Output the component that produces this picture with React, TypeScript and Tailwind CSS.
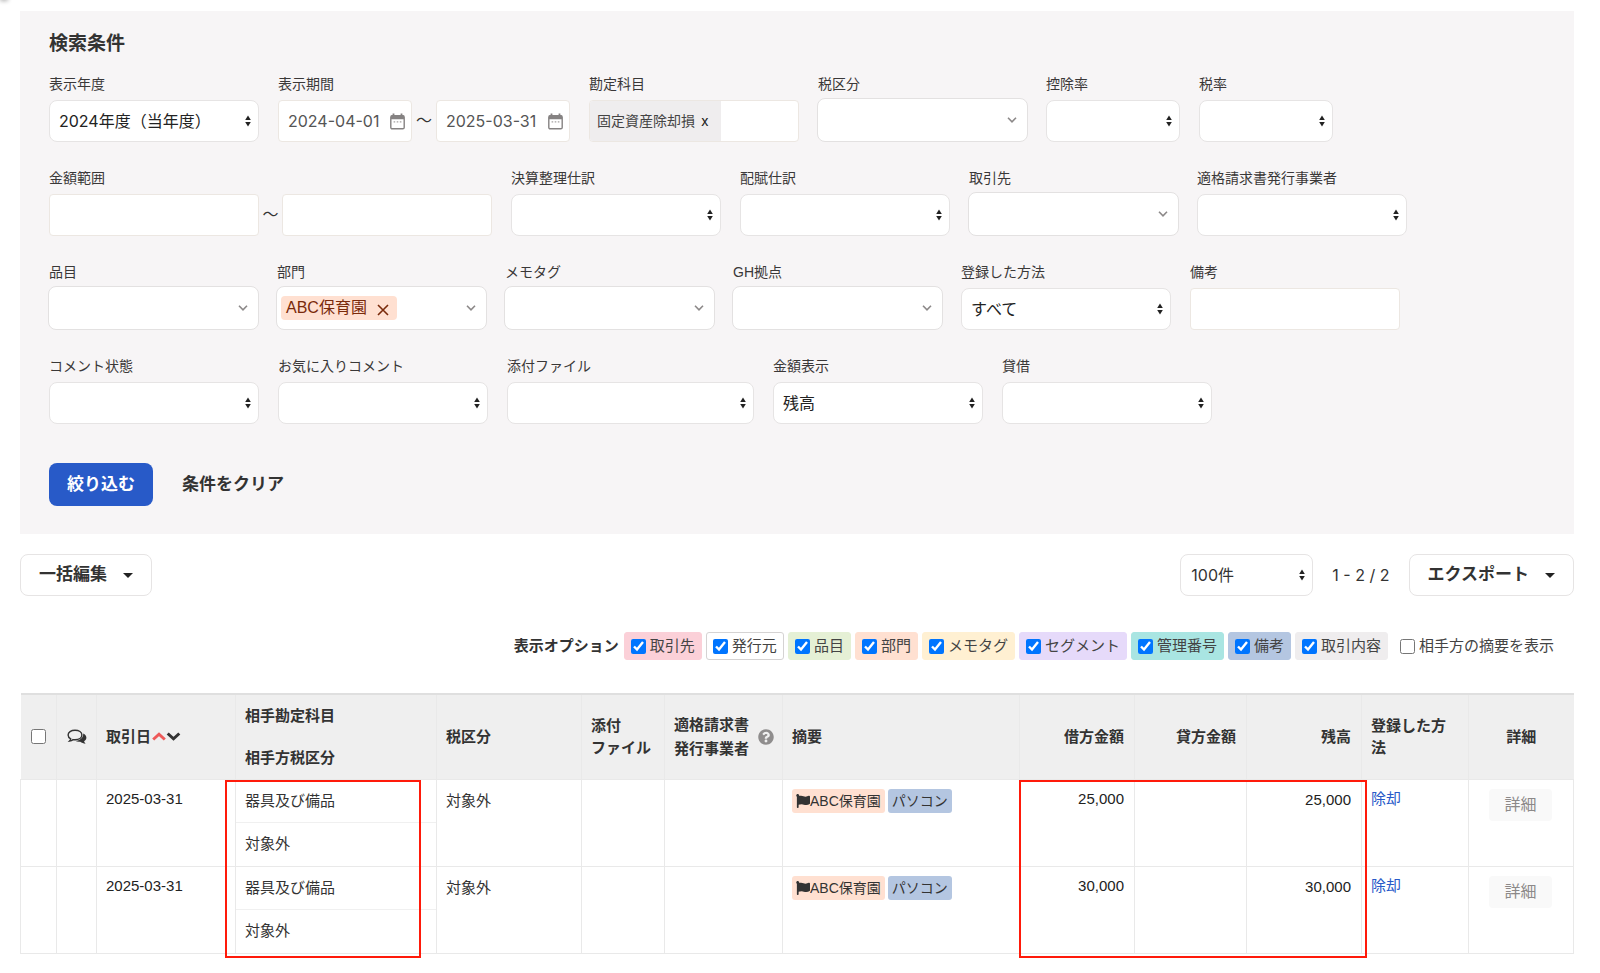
import { useId, type ReactNode } from "react";
import { FaFlag, FaQuestionCircle } from "react-icons/fa";

const FONT_UI = "font-[Inter,'Noto_Sans_CJK_JP',sans-serif]";
const FONT_TEXT = "font-['Liberation_Sans','Noto_Sans_CJK_JP',sans-serif]";

function UpDown() {
  return (
    <svg viewBox="0 0 6 12" className="pointer-events-none absolute top-1/2 right-2 h-3 w-1.5 -translate-y-1/2 fill-[#222]" aria-hidden="true">
      <path d="M3 0.5 5.8 5H0.2Z" />
      <path d="M3 11.5 5.8 7H0.2Z" />
    </svg>
  );
}

function Chevron() {
  return (
    <svg viewBox="0 0 10 6" className="mr-2.5 h-1.5 w-2.5 shrink-0 fill-none stroke-[#8c8989] stroke-[1.6]" aria-hidden="true">
      <path d="M1 0.8 5 4.8 9 0.8" />
    </svg>
  );
}

function Caret() {
  return (
    <svg viewBox="0 0 10 5" className="h-[5px] w-2.5 fill-[#222]" aria-hidden="true">
      <path d="M0 0H10L5 5Z" />
    </svg>
  );
}

function CalendarIcon() {
  return (
    <svg viewBox="0 0 15 17" className="h-[17px] w-[15px] shrink-0" aria-hidden="true">
      <rect x="0.8" y="2.8" width="13.4" height="13" rx="1.4" fill="none" stroke="#858282" strokeWidth="1.4" />
      <path d="M1 2.5H14V6.200H1Z M2.6 0.6H4.4V3H2.6Z M10.6 0.6H12.4V3H10.6Z" fill="#858282" />
      <path d="M3.6 8.2H5.2V9.6H3.6Z M6.7 8.2H8.3V9.6H6.7Z M9.8 8.2H11.4V9.6H9.8Z" fill="#a5a2a2" />
    </svg>
  );
}

function CommentsIcon() {
  return (
    <svg viewBox="0 0 20 16" className="mx-auto h-4 w-5" aria-label="コメント">
      <path
        d="M8 1.2C4 1.2 1.1 3.2 1.1 6c0 1.7 1 3 2.6 3.900-.2.8-.7 1.500-1.300 2.200 1.500-.2 2.700-.7 3.700-1.500.6.1 1.200.2 1.900.2 4 0 6.900-2 6.900-4.800S12 1.200 8 1.200Z"
        fill="none"
        stroke="#333"
        strokeWidth="1.4"
      />
      <path d="M16.200 4.400c.4 4-3 7.200-8 7.400 1.400.9 3.400 1.200 5 .9 1.500 1 3.400 1.900 5.400 2-.8-.8-1.300-1.600-1.500-2.400 1.400-.9 2.300-2.100 2.300-3.600 0-1.800-1.200-3.400-3.200-4.300Z" fill="#333" />
    </svg>
  );
}

type FieldProps = { label: string; width?: string };

function Label({ id, children }: { id: string; children: ReactNode }) {
  return (
    <label htmlFor={id} className="block text-sm leading-5 whitespace-nowrap text-[#3a3838]">
      {children}
    </label>
  );
}

function SelectField({ label, width = "w-[210px]", value = "" }: FieldProps & { value?: string }) {
  const id = useId();
  return (
    <div className={width}>
      <Label id={id}>{label}</Label>
      <div className="relative mt-1.5">
        <select id={id} className={`${FONT_UI} block h-[42px] w-full appearance-none rounded-lg border border-[#e6e4e4] bg-white pr-5 pl-[9px] text-base text-[#222]`}>
          <option>{value}</option>
        </select>
        <UpDown />
      </div>
    </div>
  );
}

function ComboField({ label, tag }: FieldProps & { tag?: string }) {
  const id = useId();
  return (
    <div className="w-[209px]">
      <Label id={id}>{label}</Label>
      <div className="-mx-px mt-1 flex h-11 items-center rounded-lg border border-[#e3e1e1] bg-white">
        {tag && (
          <span className="ml-1 flex h-6 shrink-0 items-center gap-2.5 rounded bg-[#ffe0d1] pr-2 pl-[5px] text-base text-[#7a2a0a]">
            {tag}
            <button type="button" aria-label={`${tag}を外す`} className="mt-1">
              <svg viewBox="0 0 12 12" className="size-3 fill-none stroke-[#7a2a0a] stroke-[1.6]" aria-hidden="true">
                <path d="M1 1 11 11M11 1 1 11" />
              </svg>
            </button>
          </span>
        )}
        <input id={id} type="text" role="combobox" aria-expanded="false" className="h-full min-w-0 grow bg-transparent px-2 text-base outline-none" />
        <Chevron />
      </div>
    </div>
  );
}

function TextField({ label }: FieldProps) {
  const id = useId();
  return (
    <div className="w-[210px]">
      <Label id={id}>{label}</Label>
      <input id={id} type="text" className="mt-1.5 block h-[42px] w-full rounded border border-[#ece7e2] bg-white px-2 text-base" />
    </div>
  );
}

function DateInput({ id, value, label }: { id: string; value: string; label: string }) {
  return (
    <div className="flex h-[42px] w-[134px] items-center rounded border border-[#ece7e2] bg-white pr-1.5 pl-[9px]">
      <input id={id} type="text" aria-label={label} defaultValue={value} className={`${FONT_UI} min-w-0 grow text-base text-[#555] outline-none`} />
      <CalendarIcon />
    </div>
  );
}

function SearchPanel() {
  const row = "flex flex-wrap gap-x-[19px] gap-y-3";
  return (
    <section className="mt-[11px] bg-[#f7f5f6] px-[29px] pt-[21px] pb-7">
      <h2 className="text-[19px] leading-6 font-bold text-[#333]">検索条件</h2>
      <form className="mt-[18px] flex flex-col gap-[26px]" onSubmit={(e) => e.preventDefault()}>
        <div className={row}>
          <SelectField label="表示年度" value="2024年度（当年度）" />
          <div>
            <Label id="period-from">表示期間</Label>
            <div className="mt-1.5 flex items-center">
              <DateInput id="period-from" label="表示期間（開始）" value="2024-04-01" />
              <span className="w-6 text-center text-base">〜</span>
              <DateInput id="period-to" label="表示期間（終了）" value="2025-03-31" />
            </div>
          </div>
          <div className="w-[210px]">
            <Label id="account">勘定科目</Label>
            <div className="mt-1.5 flex h-[42px] overflow-hidden rounded border border-[#ece7e2] bg-white">
              <span className="flex shrink-0 items-center gap-1.5 bg-[#efedee] pr-3 pl-[7px] text-sm text-[#444]">
                固定資産除却損
                <button type="button" aria-label="固定資産除却損を外す" className={`${FONT_UI} text-[#222]`}>x</button>
              </span>
              <input id="account" type="text" className="min-w-0 grow px-2 text-base outline-none" />
            </div>
          </div>
          <ComboField label="税区分" />
          <SelectField label="控除率" width="w-[134px]" />
          <SelectField label="税率" width="w-[134px]" />
        </div>
        <div className={row}>
          <div>
            <Label id="amount-min">金額範囲</Label>
            <div className="mt-1.5 flex items-center">
              <input id="amount-min" type="text" aria-label="金額範囲（下限）" className="h-[42px] w-[210px] rounded border border-[#ece7e2] bg-white px-2" />
              <span className="w-[23px] text-center text-base">〜</span>
              <input id="amount-max" type="text" aria-label="金額範囲（上限）" className="h-[42px] w-[210px] rounded border border-[#ece7e2] bg-white px-2" />
            </div>
          </div>
          <SelectField label="決算整理仕訳" />
          <SelectField label="配賦仕訳" />
          <ComboField label="取引先" />
          <SelectField label="適格請求書発行事業者" />
        </div>
        <div className={row}>
          <ComboField label="品目" />
          <ComboField label="部門" tag="ABC保育園" />
          <ComboField label="メモタグ" />
          <ComboField label="GH拠点" />
          <SelectField label="登録した方法" value="すべて" />
          <TextField label="備考" />
        </div>
        <div className={row}>
          <SelectField label="コメント状態" />
          <SelectField label="お気に入りコメント" />
          <SelectField label="添付ファイル" width="w-[247px]" />
          <SelectField label="金額表示" value="残高" />
          <SelectField label="貸借" />
        </div>
        <div className="mt-[13px] flex items-center gap-[29px] text-[17px] font-bold">
          <button type="submit" className="h-[43px] rounded-lg bg-[#285ac8] px-[18px] text-white">絞り込む</button>
          <button type="button" className="text-[#333]">条件をクリア</button>
        </div>
      </form>
    </section>
  );
}

const OPTIONS = [
  { label: "取引先", color: "border-[#fbd0d8] bg-[#fbd0d8]" },
  { label: "発行元", color: "border-[#d5d3d3] bg-white" },
  { label: "品目", color: "border-[#e5f0d5] bg-[#e5f0d5]" },
  { label: "部門", color: "border-[#ffe0d1] bg-[#ffe0d1]" },
  { label: "メモタグ", color: "border-[#fff0d2] bg-[#fff0d2]" },
  { label: "セグメント", color: "border-[#e6dafa] bg-[#e6dafa]" },
  { label: "管理番号", color: "border-[#a9e5e2] bg-[#a9e5e2]" },
  { label: "備考", color: "border-[#b4c6e1] bg-[#b4c6e1]" },
  { label: "取引内容", color: "border-[#efedee] bg-[#efedee]" },
];

function Toolbar() {
  const button = "flex h-[42px] items-center gap-4 rounded-lg border border-[#e6e4e4] bg-white px-[18px] text-[17px] font-bold text-[#333]";
  return (
    <div className="mt-5 flex items-center justify-between">
      <button type="button" className={button}>
        一括編集
        <Caret />
      </button>
      <div className="flex items-center gap-[19px]">
        <div className="relative w-[133px]">
          <select aria-label="表示件数" className={`${FONT_UI} block h-[42px] w-full appearance-none rounded-lg border border-[#e6e4e4] bg-white pl-2.5 text-base text-[#333]`}>
            <option>100件</option>
          </select>
          <UpDown />
        </div>
        <span className={`${FONT_UI} text-base text-[#333]`}>1 - 2 / 2</span>
        <button type="button" className={button}>
          エクスポート
          <Caret />
        </button>
      </div>
    </div>
  );
}

function DisplayOptions() {
  return (
    <div role="group" aria-labelledby="display-options" className="mt-9 flex flex-wrap items-center justify-end gap-1 pr-5 text-[15px] text-[#444]">
      <span id="display-options" className="mr-px font-bold text-[#333]">表示オプション</span>
      {OPTIONS.map((o) => (
        <label key={o.label} className={`flex h-7 items-center gap-1 rounded-[3px] border px-1.5 ${o.color}`}>
          <input type="checkbox" defaultChecked className="size-[15px] accent-[#0075ff]" />
          {o.label}
        </label>
      ))}
      <label className="ml-2 flex items-center gap-1">
        <input type="checkbox" className="size-[15px]" />
        相手方の摘要を表示
      </label>
    </div>
  );
}

const ROWS = [
  { date: "2025-03-31", account: "器具及び備品", debit: "25,000", balance: "25,000" },
  { date: "2025-03-31", account: "器具及び備品", debit: "30,000", balance: "30,000" },
];

const COLUMNS = [
  "w-9", "w-10", "w-[139px]", "w-[201px]", "w-[145px]", "w-[83px]", "w-[118px]", "",
  "w-[115px]", "w-[112px]", "w-[115px]", "w-[107px]", "w-[105px]",
];

function Ledger() {
  const th = "border-x border-[#e9e9e9] pr-2.5 pl-[9px]";
  const td = "border border-[#e9e9e9] pr-2.5 pl-[9px]";
  return (
    <table className="mt-[33px] w-full table-fixed border-collapse text-[15px] leading-[22px] text-[#333]">
      <colgroup>
        {COLUMNS.map((width, i) => (
          <col key={i} className={width} />
        ))}
      </colgroup>
      <thead className="bg-[#efefef] text-left">
        <tr className="h-[85px] border-t-2 border-b border-t-[#dfdfdf] border-b-[#e5e5e5]">
          <th className="border-r border-[#e9e9e9]">
            <input type="checkbox" aria-label="すべて選択" className="mx-auto block size-[15px]" />
          </th>
          <th className="border-x border-[#e9e9e9]">
            <CommentsIcon />
          </th>
          <th className={th}>
            <span className="flex items-center">
              取引日
              <svg viewBox="0 0 29 9" className="ml-px h-[9px] w-[29px] fill-none stroke-[3]" aria-label="並べ替え">
                <path d="M1.200 7.500 7 2.200 12.800 7.500" stroke="#ee5a5a" />
                <path d="M15.700 1.500 21.500 6.800 27.300 1.500" stroke="#333" />
              </svg>
            </span>
          </th>
          <th className={th}>
            <span className="flex flex-col gap-5">
              <span>相手勘定科目</span>
              <span>相手方税区分</span>
            </span>
          </th>
          <th className={th}>税区分</th>
          <th className={th}>添付<br />ファイル</th>
          <th className="border-x border-[#e9e9e9] pr-2 pl-[9px]">
            <span className="flex items-center justify-between leading-6 whitespace-nowrap">
              <span>適格請求書<br />発行事業者</span>
              <FaQuestionCircle className="size-4 text-[#8f8d8d]" />
            </span>
          </th>
          <th className={th}>摘要</th>
          <th className={`${th} text-right`}>借方金額</th>
          <th className={`${th} text-right`}>貸方金額</th>
          <th className={`${th} text-right`}>残高</th>
          <th className={th}>登録した方法</th>
          <th className="border-l border-[#e9e9e9] text-center">詳細</th>
        </tr>
      </thead>
      <tbody>
        {ROWS.map((row, i) => (
          <tr key={row.debit} className="h-[87px] align-top">
            <td className={td} />
            <td className={td} />
            <td className={`${td} pt-2 text-[#222]`}>{row.date}</td>
            <td className="relative border border-[#e9e9e9]">
              <div className="border-b border-[#f0f0f0] py-2.5 pl-[9px]">{row.account}</div>
              <div className="pt-2.5 pl-[9px]">対象外</div>
              {i === 0 && <div className="pointer-events-none absolute top-0 -left-[11px] z-10 h-[178px] w-[196px] border-2 border-[#ff1a0a]" />}
            </td>
            <td className={`${td} pt-2.5`}>対象外</td>
            <td className={td} />
            <td className={td} />
            <td className={`${td} pt-[9px]`}>
              <span className="flex gap-[3px] text-sm whitespace-nowrap">
                <span className="flex h-6 items-center rounded-[3px] bg-[#ffe0d1] px-1">
                  <FaFlag className="size-3.5" />
                  ABC保育園
                </span>
                <span className="flex h-6 items-center rounded-[3px] bg-[#b4c6e1] px-1">パソコン</span>
              </span>
            </td>
            <td className={`${td} relative pt-2 text-right text-[#222]`}>
              {row.debit}
              {i === 0 && <div className="pointer-events-none absolute top-0 -left-px z-10 h-[178px] w-[348px] border-2 border-[#ff1a0a]" />}
            </td>
            <td className={td} />
            <td className={`${td} pt-[9px] text-right text-[#222]`}>{row.balance}</td>
            <td className={`${td} pt-2`}>
              <a href="#disposal" className="text-[#285ac8]">除却</a>
            </td>
            <td className={`${td} pt-[9px] text-center`}>
              <button type="button" className="h-8 w-[63px] rounded bg-[#f9f9f9] text-base text-[#8c8989]">詳細</button>
            </td>
          </tr>
        ))}
      </tbody>
    </table>
  );
}

export default function App() {
  return (
    <main className={`${FONT_TEXT} relative flow-root min-h-screen overflow-hidden bg-white pr-[26px] pb-4 pl-5 text-[#333]`}>
      <div className="absolute -top-2 left-0 h-2 w-2 shadow-[0_1px_4px_rgba(0,0,0,0.3)]" aria-hidden="true" />
      <SearchPanel />
      <Toolbar />
      <DisplayOptions />
      <Ledger />
    </main>
  );
}
